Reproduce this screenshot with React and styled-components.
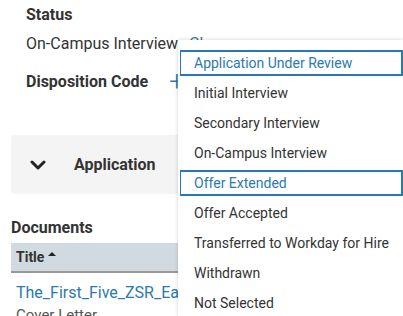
import React from 'react';
import styled, { createGlobalStyle } from 'styled-components';

const GlobalStyle = createGlobalStyle`
  body {
    margin: 0;
    font-family: Roboto, "Liberation Sans", Arial, sans-serif;
    color: #333;
    background: #fff;
    overflow: hidden;
  }
`;

const Page = styled.div`
  position: relative;
  width: 403px;
  height: 316px;
  overflow: hidden;
  padding: 0 11px;
  box-sizing: border-box;
`;

const StatusSection = styled.div`
  padding: 6px 15px 0;
`;

const Label = styled.div`
  font-weight: 700;
  font-size: 16px;
  line-height: 18px;
  color: #333;
`;

const Value = styled.div`
  font-size: 16px;
  line-height: 18px;
  margin-top: 11px;
  display: flex;
  gap: 11px;
  white-space: nowrap;
`;

const Link = styled.a`
  color: #2a7ab0;
  text-decoration: none;
`;

const DispositionRow = styled.div`
  display: flex;
  align-items: center;
  gap: 21px;
  margin-top: 20px;
`;

const Plus = styled.span`
  color: #2a7ab0;
  font-size: 28px;
  line-height: 18px;
  font-weight: 300;
`;

const Panel = styled.div`
  margin-top: 44px;
  height: 59px;
  background: #f4f4f4;
  border-radius: 4px;
  display: flex;
  align-items: center;
  padding-left: 19px;
  gap: 28px;
`;

const PanelTitle = styled.span`
  font-weight: 700;
  font-size: 16px;
`;

const SectionTitle = styled.div`
  font-weight: 700;
  font-size: 16px;
  line-height: 18px;
  margin-top: 25px;
  color: #333;
`;

const Table = styled.div`
  margin-top: 6px;
`;

const HeaderRow = styled.div`
  height: 28px;
  background: #d1dae0;
  border-bottom: 2px solid #999;
  display: flex;
  align-items: center;
  padding-left: 5px;
  font-weight: 700;
  font-size: 14px;
  gap: 4px;
`;

const Cell = styled.div`
  padding: 10px 5px 0;
  font-size: 16px;
  line-height: 20px;
  white-space: nowrap;
`;

const SubText = styled.div`
  padding: 3px 5px 0;
  font-size: 15px;
  line-height: 18px;
  color: #555;
`;

const Menu = styled.ul`
  position: absolute;
  left: 178px;
  top: 40px;
  width: 226px;
  margin: 0;
  padding: 6px 0 0;
  list-style: none;
  background: #fff;
  box-shadow: 0 0 4px rgba(0, 0, 0, 0.18);
`;

const Item = styled.li`
  height: 26px;
  margin: 4px 1px 0 2px;
  padding-left: 13px;
  display: flex;
  align-items: center;
  font-size: 14px;
  box-sizing: border-box;
  color: ${p => (p.active ? '#2a7ab0' : '#333')};
  border: 1px solid ${p => (p.active ? '#2a7ab0' : 'transparent')};
  ${p => p.active && 'border-width: 2px 2px 2px 1px;'}
`;

const Chevron = () => (
  <svg width="16" height="12" viewBox="0 0 16 12">
    <path d="M2 3 L8 9 L14 3" fill="none" stroke="#222" strokeWidth="3" strokeLinecap="round" strokeLinejoin="round" />
  </svg>
);

const Caret = () => (
  <svg width="8" height="6" viewBox="0 0 8 6" style={{ marginTop: -6 }}>
    <path d="M0 5 L4 1 L8 5 Z" fill="#222" />
  </svg>
);

const options = [
  ['Application Under Review', true],
  ['Initial Interview'],
  ['Secondary Interview'],
  ['On-Campus Interview'],
  ['Offer Extended', true],
  ['Offer Accepted'],
  ['Transferred to Workday for Hire'],
  ['Withdrawn'],
  ['Not Selected'],
];

const App = () => (
  <Page>
    <GlobalStyle />
    <StatusSection>
      <Label>Status</Label>
      <Value>
        On-Campus Interview <Link href="#">Change</Link>
      </Value>
      <DispositionRow>
        <Label>Disposition Code</Label>
        <Plus>+</Plus>
      </DispositionRow>
    </StatusSection>

    <Panel>
      <Chevron />
      <PanelTitle>Application</PanelTitle>
    </Panel>

    <SectionTitle>Documents</SectionTitle>
    <Table>
      <HeaderRow>
        Title <Caret />
      </HeaderRow>
      <Cell>
        <Link href="#">The_First_Five_ZSR_Early_Career.pdf</Link>
      </Cell>
      <SubText>Cover Letter</SubText>
    </Table>

    <Menu>
      {options.map(([label, active]) => (
        <Item key={label} active={active}>{label}</Item>
      ))}
    </Menu>
  </Page>
);

export default App;
